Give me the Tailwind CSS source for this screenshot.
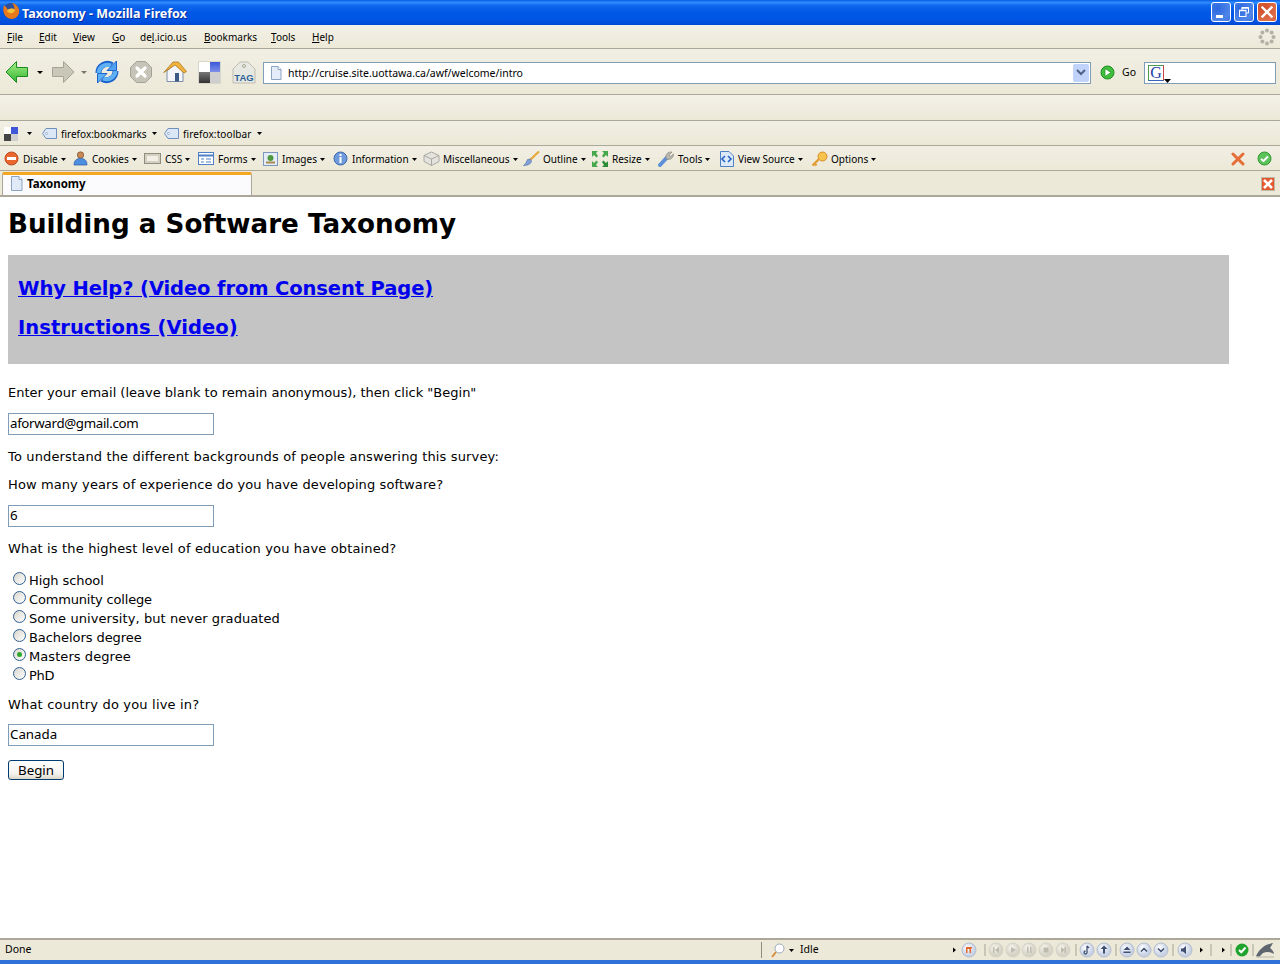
<!DOCTYPE html>
<html lang="en">
<head>
<meta charset="utf-8">
<title>Taxonomy - Mozilla Firefox</title>
<script src="https://cdn.jsdelivr.net/npm/@tailwindcss/browser@4"></script>
</head>
<body class="bg-white">
<div class="w-[1280px] h-[964px] overflow-hidden flex flex-col font-['Noto_Sans',sans-serif] text-[10px] text-black bg-[#ece9d8]">

  <!-- title bar -->
  <div class="h-[25px] shrink-0 flex items-center pl-[2px] pr-[3px] bg-[linear-gradient(#0a5fe6_0%,#2f8cff_10%,#0f68ee_22%,#0058e6_50%,#0055e5_75%,#0048d6_100%)]">
    <svg width="18" height="18" viewBox="0 0 18 18" class="shrink-0 mb-[3px]">
      <circle cx="9" cy="9" r="8" fill="#2b4f9e"/>
      <path d="M2 3 C0 8 2 16 9 17 C15 17 18 12 17 7.500 C16 4 13.500 1.500 10 1 C12 3.500 13 6 12 8 C10 6 8 6 6 8 C5 6 3.500 4.500 2 3Z" fill="#e8791c"/>
      <path d="M5 9 C7 6 11 6 13 8 C12 12 7 12 5 9Z" fill="#f5c23a"/>
    </svg>
    <span class="ml-[2px] text-white font-bold text-[12.5px] leading-none mt-[3px] [text-shadow:1px_1px_#0a2f9c]">Taxonomy - Mozilla Firefox</span>
    <div class="ml-auto flex gap-[3px] -mt-[1px]">
      <div class="w-[20px] h-[20px] rounded-[3px] border border-white bg-[radial-gradient(circle_at_30%_30%,#2b68e0,#4f86e8_70%,#3a6fe0)] flex items-end pl-[4px] pb-[3px]"><div class="w-[7px] h-[3px] bg-white"></div></div>
      <div class="w-[20px] h-[20px] rounded-[3px] border border-white bg-[radial-gradient(circle_at_30%_30%,#2b68e0,#4f86e8_70%,#3a6fe0)] flex items-center justify-center">
        <svg width="12" height="12" viewBox="0 0 12 12" fill="none" stroke="#fff"><rect x="1.500" y="4.500" width="6.500" height="6"/><path d="M4 4V1.500h6.500V7H8"/><path d="M1 4.500h7M3.500 2h7" stroke-width="1.500"/></svg>
      </div>
      <div class="w-[20px] h-[20px] rounded-[3px] border border-white bg-[radial-gradient(circle_at_30%_30%,#cf4a24,#e0704c_75%,#d8562f)] flex items-center justify-center">
        <svg width="12" height="12" viewBox="0 0 12 12" stroke="#fff" stroke-width="2.400" stroke-linecap="square"><path d="M1.500 1.500l9 9M10.500 1.500l-9 9"/></svg>
      </div>
    </div>
  </div>

  <!-- menu bar -->
  <div class="h-[24px] shrink-0 flex items-center pl-[7px] pt-[2px] border-b border-[#aca899] bg-[linear-gradient(#f3f1e7,#ece9d8)]">
    <span class="w-[32px]"><u>F</u>ile</span>
    <span class="w-[34px]"><u>E</u>dit</span>
    <span class="w-[39px]"><u>V</u>iew</span>
    <span class="w-[28px]"><u>G</u>o</span>
    <span class="w-[64px]">de<u>l</u>.icio.us</span>
    <span class="w-[67px]"><u>B</u>ookmarks</span>
    <span class="w-[41px]"><u>T</u>ools</span>
    <span><u>H</u>elp</span>
    <svg width="18" height="18" viewBox="0 0 18 18" class="ml-auto mr-[4px] -mt-[2px]" fill="#b3b0a6">
      <circle cx="9" cy="2.500" r="2"/><circle cx="13.600" cy="4.400" r="2"/><circle cx="15.500" cy="9" r="2"/><circle cx="13.600" cy="13.600" r="2"/><circle cx="9" cy="15.500" r="2"/><circle cx="4.400" cy="13.600" r="2"/><circle cx="2.500" cy="9" r="2"/><circle cx="4.400" cy="4.400" r="2"/>
    </svg>
  </div>

  <!-- navigation toolbar -->
  <div class="h-[46px] shrink-0 flex items-center pl-[5px] pt-[1px] border-b border-[#aca899] bg-[linear-gradient(#f1efe4,#ece9d8)]">
    <svg width="24" height="24" viewBox="0 0 24 24" class="shrink-0">
      <defs><linearGradient id="gb" x1="0" y1="0" x2="0" y2="1"><stop offset="0" stop-color="#a8ee88"/><stop offset="1" stop-color="#2fb52f"/></linearGradient></defs>
      <path d="M1 12 11.500 1.500V7.500H22.500V16.500H11.500V22.500Z" fill="url(#gb)" stroke="#1d8a22" stroke-linejoin="round"/>
    </svg>
    <svg width="6" height="3" viewBox="0 0 6 3" class="shrink-0 ml-[8px]"><path d="M0 0h6L3 3z" fill="#000"/></svg>
    <svg width="24" height="24" viewBox="0 0 24 24" class="shrink-0 ml-[8px]">
      <path d="M23 12 12.500 1.500V7.500H1.500V16.500H12.500V22.500Z" fill="#c9c7b8" stroke="#a5a393" stroke-linejoin="round"/>
    </svg>
    <svg width="6" height="3" viewBox="0 0 6 3" class="shrink-0 ml-[6px]"><path d="M0 0h6L3 3z" fill="#77766c"/></svg>
    <svg width="24" height="24" viewBox="0 0 24 24" class="shrink-0 ml-[8px]" fill="none">
      <path d="M3.500 13A9 9 0 0 1 17 5" stroke="#1b62cc" stroke-width="6"/>
      <path d="M21.500 1V10.500H12Z" fill="#4fa3f0" stroke="#1b62cc"/>
      <path d="M20.500 11A9 9 0 0 1 7 19" stroke="#1b62cc" stroke-width="6"/>
      <path d="M2.500 23V13.500H12Z" fill="#5db0f5" stroke="#1b62cc"/>
      <path d="M3.500 13A9 9 0 0 1 16 5.500" stroke="#5fb0f5" stroke-width="4"/>
      <path d="M20.500 11A9 9 0 0 1 8 18.500" stroke="#5fb0f5" stroke-width="4"/>
    </svg>
    <svg width="24" height="24" viewBox="0 0 24 24" class="shrink-0 ml-[10px]">
      <path d="M7.500 1.500h9l6 6v9l-6 6h-9l-6-6v-9z" fill="#c6c4b8" stroke="#a3a296"/>
      <path d="M8 8l8 8M16 8l-8 8" stroke="#fff" stroke-width="3.200" stroke-linecap="round"/>
    </svg>
    <svg width="24" height="24" viewBox="0 0 24 24" class="shrink-0 ml-[10px]">
      <path d="M4 11V21.500H20V11L12 4Z" fill="#f4f6fb" stroke="#7f8fa8"/>
      <rect x="12" y="13" width="4" height="8.500" fill="#3b5a86"/>
      <path d="M0.800 12.500 10 2H15.500L23.500 11.500 21 13 12 5Z" fill="#f3b23e" stroke="#a87a22" stroke-width=".8"/>
    </svg>
    <div class="shrink-0 ml-[11px] w-[23px] h-[23px] grid grid-cols-2 grid-rows-2 border border-[#d8d6ca]">
      <div class="bg-white"></div><div class="bg-[linear-gradient(#3d57d8,#7d8fe8)]"></div><div class="bg-[linear-gradient(#777,#333)]"></div><div class="bg-[#cfcfcf]"></div>
    </div>
    <svg width="24" height="24" viewBox="0 0 24 24" class="shrink-0 ml-[11px]">
      <path d="M1 9 8 2H16L23 9V23H1Z" fill="#e8e8e2" stroke="#bdbcb0"/>
      <circle cx="12" cy="6" r="1.500" fill="#ece9d8" stroke="#a9a89c"/>
      <text x="12" y="21" text-anchor="middle" font-family="Liberation Sans" font-weight="700" font-size="9.500" fill="#2a6297">TAG</text>
    </svg>
    <div class="shrink-0 ml-[7px] mt-[1px] w-[828px] h-[22px] border border-[#7f9db9] bg-white flex items-center pl-[6px] pr-[1px]">
      <svg width="12" height="14" viewBox="0 0 12 14" class="shrink-0"><path d="M1.500.5H8L11 3.500V13.500H1.500Z" fill="#e4edf9" stroke="#8ca4c4"/><path d="M8 .5V3.500H11" fill="#fff" stroke="#8ca4c4"/></svg>
      <span class="ml-[6px] text-[10.5px] pt-[2px]">http://cruise.site.uottawa.ca/awf/welcome/intro</span>
      <div class="ml-auto w-[16px] h-[18px] rounded-[2px] bg-[#c1d3fb] flex items-center justify-center">
        <svg width="10" height="7" viewBox="0 0 10 7" fill="none" stroke="#4d6185" stroke-width="2"><path d="M1 1l4 4 4-4"/></svg>
      </div>
    </div>
    <svg width="15" height="15" viewBox="0 0 15 15" class="shrink-0 ml-[9px]">
      <circle cx="7.500" cy="7.500" r="6.500" fill="#3fc03f" stroke="#1c8c1c"/>
      <path d="M5 3.500 11 7.500 5 11.500Z" fill="#fff" stroke="#1c8c1c" stroke-width=".7"/>
    </svg>
    <span class="ml-[7px] w-[22px] shrink-0 pt-[2px] text-[10.5px]">Go</span>
    <div class="shrink-0 mt-[1px] w-[132px] h-[22px] border border-[#7f9db9] bg-white flex items-center pl-[3px]">
      <div class="relative w-[16px] h-[16px] border border-[#4c9a4c] border-r-[#cc4444] border-b-[#3a64b8] flex items-center justify-center font-['Liberation_Serif',serif] text-[#1a3fa0] text-[16px] leading-none">G
        <svg width="7" height="4" viewBox="0 0 7 4" class="absolute left-[15px] top-[13px]"><path d="M0 0h7L3.500 4z" fill="#000"/></svg>
      </div>
    </div>
  </div>

  <!-- empty toolbar -->
  <div class="h-[26px] shrink-0 border-b border-[#aca899] bg-[linear-gradient(#f3f1e7,#ece9d8)]"></div>

  <!-- bookmarks toolbar -->
  <div class="h-[25px] shrink-0 flex items-center pl-[4px] pt-[1px] border-b border-[#aca899] bg-[linear-gradient(#f1efe4,#ece9d8)]">
    <div class="shrink-0 w-[14px] h-[14px] grid grid-cols-2 grid-rows-2">
      <div class="bg-white"></div><div class="bg-[#3d57d8]"></div><div class="bg-[#444]"></div><div class="bg-[#cfcfcf]"></div>
    </div>
    <svg width="5" height="3" viewBox="0 0 5 3" class="shrink-0 ml-[9px]"><path d="M0 0h5L2.500 3z"/></svg>
    <svg width="15" height="11" viewBox="0 0 15 11" class="shrink-0 ml-[10px]"><path d="M4 .5H14.500V10.500H4L.5 5.500Z" fill="#dbe7f7" stroke="#6f8fbd"/><circle cx="4.500" cy="5.500" r="1" fill="#fff" stroke="#6f8fbd" stroke-width=".6"/></svg>
    <span class="ml-[4px] pt-[1px] w-[90px] shrink-0">firefox:bookmarks</span>
    <svg width="5" height="3" viewBox="0 0 5 3" class="shrink-0 ml-[1px]"><path d="M0 0h5L2.500 3z"/></svg>
    <svg width="15" height="11" viewBox="0 0 15 11" class="shrink-0 ml-[7px]"><path d="M4 .5H14.500V10.500H4L.5 5.500Z" fill="#dbe7f7" stroke="#6f8fbd"/><circle cx="4.500" cy="5.500" r="1" fill="#fff" stroke="#6f8fbd" stroke-width=".6"/></svg>
    <span class="ml-[4px] pt-[1px] w-[73px] shrink-0 tracking-[0.1px]">firefox:toolbar</span>
    <svg width="5" height="3" viewBox="0 0 5 3" class="shrink-0 ml-[1px]"><path d="M0 0h5L2.500 3z"/></svg>
  </div>

  <!-- web developer toolbar -->
  <div class="h-[25px] shrink-0 flex items-center pl-[4px] pr-[8px] pt-[2px] border-b border-[#aca899] bg-[linear-gradient(#f1efe4,#ece9d8)]">
    <div class="w-[69px] shrink-0 flex items-center">
      <svg width="15" height="15" viewBox="0 0 15 15" class="shrink-0 -mt-[1px]"><circle cx="7.500" cy="7.500" r="6.500" fill="#e9672f" stroke="#c04a20"/><rect x="3" y="6" width="9" height="3" fill="#fff"/></svg>
      <span class="ml-[4px]">Disable</span><svg width="5" height="3" viewBox="0 0 5 3" class="ml-[3px]"><path d="M0 0h5L2.500 3z"/></svg>
    </div>
    <div class="w-[71px] shrink-0 flex items-center">
      <svg width="15" height="15" viewBox="0 0 15 15" class="shrink-0 -mt-[1px]"><circle cx="7.500" cy="4" r="3.200" fill="#c98a55" stroke="#7a4f2c" stroke-width=".7"/><path d="M1 14C1 9 4 7.500 7.500 7.500S14 9 14 14Z" fill="#4d8ee0" stroke="#2c5ca6" stroke-width=".7"/></svg>
      <span class="ml-[4px]">Cookies</span><svg width="5" height="3" viewBox="0 0 5 3" class="ml-[3px]"><path d="M0 0h5L2.500 3z"/></svg>
    </div>
    <div class="w-[54px] shrink-0 flex items-center">
      <svg width="17" height="11" viewBox="0 0 17 11" class="shrink-0 -mt-[1px]"><rect x=".5" y=".5" width="16" height="10" fill="#d3d0c2" stroke="#8f8d80"/><rect x="3" y="3" width="11" height="5" fill="#f2f0e6"/></svg>
      <span class="ml-[4px]">CSS</span><svg width="5" height="3" viewBox="0 0 5 3" class="ml-[3px]"><path d="M0 0h5L2.500 3z"/></svg>
    </div>
    <div class="w-[65px] shrink-0 flex items-center">
      <svg width="16" height="13" viewBox="0 0 16 13" class="shrink-0 -mt-[1px]"><rect x=".5" y=".5" width="15" height="12" fill="#fff" stroke="#4f7fc4"/><path d="M1 3.500h14" stroke="#4f7fc4" stroke-width="2"/><path d="M3 7h3M8 7h5M3 10h3M8 10h5" stroke="#4f7fc4"/></svg>
      <span class="ml-[4px]">Forms</span><svg width="5" height="3" viewBox="0 0 5 3" class="ml-[3px]"><path d="M0 0h5L2.500 3z"/></svg>
    </div>
    <div class="w-[70px] shrink-0 flex items-center">
      <svg width="15" height="14" viewBox="0 0 15 14" class="shrink-0 -mt-[1px]"><rect x=".5" y=".5" width="14" height="13" fill="#e4edf7" stroke="#7d97bd"/><circle cx="7.500" cy="6" r="3" fill="#4f9a3e"/><rect x="3" y="9.500" width="9" height="2" fill="#a98a4f"/></svg>
      <span class="ml-[4px]">Images</span><svg width="5" height="3" viewBox="0 0 5 3" class="ml-[3px]"><path d="M0 0h5L2.500 3z"/></svg>
    </div>
    <div class="w-[90px] shrink-0 flex items-center">
      <svg width="15" height="15" viewBox="0 0 15 15" class="shrink-0 -mt-[1px]"><circle cx="7.500" cy="7.500" r="6.500" fill="#6f9bdc" stroke="#3a68ad"/><rect x="6.500" y="3" width="2" height="2" fill="#fff"/><rect x="6.500" y="6" width="2" height="6" fill="#fff"/></svg>
      <span class="ml-[4px]">Information</span><svg width="5" height="3" viewBox="0 0 5 3" class="ml-[3px]"><path d="M0 0h5L2.500 3z"/></svg>
    </div>
    <div class="w-[100px] shrink-0 flex items-center">
      <svg width="17" height="15" viewBox="0 0 17 15" class="shrink-0 -mt-[1px]"><path d="M8.500 1 16 4.500V10.500L8.500 14.500 1 10.500V4.500Z" fill="#e4e3de" stroke="#a9a8a0"/><path d="M1 4.500 8.500 8 16 4.500M8.500 8V14.500" fill="none" stroke="#a9a8a0"/></svg>
      <span class="ml-[3px]">Miscellaneous</span><svg width="5" height="3" viewBox="0 0 5 3" class="ml-[3px]"><path d="M0 0h5L2.500 3z"/></svg>
    </div>
    <div class="w-[68px] shrink-0 flex items-center">
      <svg width="17" height="15" viewBox="0 0 17 15" class="shrink-0 -mt-[1px]"><path d="M16 .5 7 9" stroke="#e7a93a" stroke-width="2.200"/><path d="M7.500 8 4.500 8.500C3 11 3 13 .5 14.500 4 14.500 8 13.500 8.500 10Z" fill="#7fa0d6" stroke="#4f6fa8" stroke-width=".6"/></svg>
      <span class="ml-[3px]">Outline</span><svg width="5" height="3" viewBox="0 0 5 3" class="ml-[3px]"><path d="M0 0h5L2.500 3z"/></svg>
    </div>
    <div class="w-[67px] shrink-0 flex items-center">
      <svg width="18" height="18" viewBox="0 0 18 18" class="shrink-0 -mt-[1px]" fill="#45a84a"><path d="M1 1H7L5 3 7 6 5.500 7.500 3 5 1 7Z"/><path d="M17 1V7L15 5 12.500 7.500 11 6 13 3 11 1Z"/><path d="M1 17V11L3 13 5.500 10.500 7 12 5 15 7 17Z"/><path d="M17 17H11L13 15 11 12 12.500 10.500 15 13 17 11Z" fill="#2a8c35"/></svg>
      <span class="ml-[3px]">Resize</span><svg width="5" height="3" viewBox="0 0 5 3" class="ml-[3px]"><path d="M0 0h5L2.500 3z"/></svg>
    </div>
    <div class="w-[61px] shrink-0 flex items-center">
      <svg width="16" height="16" viewBox="0 0 16 16" class="shrink-0 -mt-[1px]"><path d="M2 14 9 6.500" stroke="#5f8fd6" stroke-width="4" stroke-linecap="round"/><path d="M8 7C7 3.500 10 .5 14 1L11 4 12.500 5.500 15.500 3C15.500 7 12 9.500 8.500 8Z" fill="#b9b8b0" stroke="#7d7c74" stroke-width=".6"/></svg>
      <span class="ml-[4px]">Tools</span><svg width="5" height="3" viewBox="0 0 5 3" class="ml-[3px]"><path d="M0 0h5L2.500 3z"/></svg>
    </div>
    <div class="w-[92px] shrink-0 flex items-center">
      <svg width="15" height="16" viewBox="0 0 15 16" class="shrink-0 -mt-[1px]"><path d="M1.500.5H10L14.500 5V15.500H1.500Z" fill="#dce9f9" stroke="#4f7fc4"/><path d="M6 5 3 8l3 3M9 5l3 3-3 3" fill="none" stroke="#2a62c2" stroke-width="1.600"/></svg>
      <span class="ml-[4px]">View Source</span><svg width="5" height="3" viewBox="0 0 5 3" class="ml-[3px]"><path d="M0 0h5L2.500 3z"/></svg>
    </div>
    <div class="shrink-0 flex items-center">
      <svg width="17" height="16" viewBox="0 0 17 16" class="shrink-0 -mt-[1px]"><circle cx="11.500" cy="5.500" r="4.500" fill="#f6c34d" stroke="#d98a2a"/><path d="M8 8 1.500 14.500M3.500 12.500l2 2" stroke="#e39b35" stroke-width="2.400"/></svg>
      <span class="ml-[3px]">Options</span><svg width="5" height="3" viewBox="0 0 5 3" class="ml-[3px]"><path d="M0 0h5L2.500 3z"/></svg>
    </div>
    <svg width="14" height="14" viewBox="0 0 14 14" class="ml-auto shrink-0 -mt-[1px]" stroke="#e56d36" stroke-width="3" stroke-linecap="round"><path d="M2 2l10 10M12 2 2 12"/></svg>
    <svg width="15" height="15" viewBox="0 0 15 15" class="ml-[12px] shrink-0 -mt-[1px]"><circle cx="7.500" cy="7.500" r="6.500" fill="#5cc25c" stroke="#2e9a2e"/><path d="M4 8l2.500 2L11 5.500" fill="none" stroke="#fff" stroke-width="2"/></svg>
  </div>

  <!-- tab bar -->
  <div class="h-[26px] shrink-0 flex items-end pl-[2px] border-b-[2px] border-[#aca899] bg-[#ece9d8]">
    <div class="w-[250px] h-[23px] flex items-center pl-[7px] pb-[3px] bg-[#fbfbfd] border-x border-[#aca899] border-t-[3px] border-t-[#f5a623] rounded-t-[2px]">
      <svg width="13" height="15" viewBox="0 0 13 15" class="shrink-0"><path d="M1.500.5H9L12 3.500V14.500H1.500Z" fill="#e1ebf8" stroke="#8ca4c4"/><path d="M9 .5V3.500H12" fill="#fff" stroke="#8ca4c4"/></svg>
      <span class="ml-[4px] font-bold text-[11.5px]">Taxonomy</span>
    </div>
    <div class="ml-auto mr-[5px] mb-[4px] w-[14px] h-[14px] bg-[#e4592f] border border-[#bdb9a6] flex items-center justify-center">
      <svg width="10" height="10" viewBox="0 0 10 10" stroke="#fff" stroke-width="2.600"><path d="M1 1l8 8M9 1 1 9"/></svg>
    </div>
  </div>

  <!-- page content -->
  <main class="h-[741px] shrink-0 bg-white px-[8px] font-['DejaVu_Sans',sans-serif] text-[13px] leading-[16px] overflow-hidden">
    <h1 class="mt-[11px] mb-[15px] text-[26.2px] leading-[32px] font-bold">Building a Software Taxonomy</h1>
    <div class="w-[1221px] h-[109px] bg-[#c4c4c4] pl-[10px] pt-[22px] text-[19.5px] leading-[24px] font-bold text-[#0000ee]">
      <a href="#" class="block underline tracking-[-0.11px]">Why Help? (Video from Consent Page)</a>
      <a href="#" class="block underline mt-[15px] tracking-[0.05px]">Instructions (Video)</a>
    </div>
    <p class="mt-[21px]">Enter your email (leave blank to remain anonymous), then click "Begin"</p>
    <input type="text" value="aforward@gmail.com" class="block mt-[12px] w-[206px] h-[22px] border border-[#7f9db9] pl-[1px] pb-[2px] font-['Noto_Sans',sans-serif] text-[13.3px] tracking-[-0.33px] bg-white">
    <p class="mt-[14px] tracking-[0.15px]">To understand the different backgrounds of people answering this survey:</p>
    <p class="mt-[12px] tracking-[0.1px]">How many years of experience do you have developing software?</p>
    <input type="text" value="6" class="block mt-[12px] w-[206px] h-[22px] border border-[#7f9db9] pl-[1px] pb-[2px] font-['Noto_Sans',sans-serif] text-[13.3px] bg-white">
    <p class="mt-[14px] tracking-[0.16px]">What is the highest level of education you have obtained?</p>
    <div class="mt-[14px]">
      <div class="h-[19px] flex items-center pl-[5px]"><span class="w-[13px] h-[13px] rounded-full border border-[#2f5f8f] bg-[linear-gradient(135deg,#d8d6cc,#fff)] -mt-[5px] shrink-0"></span><span class="ml-[3px] tracking-[-0.09px]">High school</span></div>
      <div class="h-[19px] flex items-center pl-[5px]"><span class="w-[13px] h-[13px] rounded-full border border-[#2f5f8f] bg-[linear-gradient(135deg,#d8d6cc,#fff)] -mt-[5px] shrink-0"></span><span class="ml-[3px] tracking-[-0.18px]">Community college</span></div>
      <div class="h-[19px] flex items-center pl-[5px]"><span class="w-[13px] h-[13px] rounded-full border border-[#2f5f8f] bg-[linear-gradient(135deg,#d8d6cc,#fff)] -mt-[5px] shrink-0"></span><span class="ml-[3px] tracking-[0.08px]">Some university, but never graduated</span></div>
      <div class="h-[19px] flex items-center pl-[5px]"><span class="w-[13px] h-[13px] rounded-full border border-[#2f5f8f] bg-[linear-gradient(135deg,#d8d6cc,#fff)] -mt-[5px] shrink-0"></span><span class="ml-[3px] tracking-[-0.06px]">Bachelors degree</span></div>
      <div class="h-[19px] flex items-center pl-[5px]"><span class="w-[13px] h-[13px] rounded-full border border-[#2f5f8f] bg-[linear-gradient(135deg,#d8d6cc,#fff)] -mt-[5px] shrink-0 flex items-center justify-center"><span class="w-[5px] h-[5px] rounded-full bg-[#2fa82f]"></span></span><span class="ml-[3px] tracking-[0.07px]">Masters degree</span></div>
      <div class="h-[19px] flex items-center pl-[5px]"><span class="w-[13px] h-[13px] rounded-full border border-[#2f5f8f] bg-[linear-gradient(135deg,#d8d6cc,#fff)] -mt-[5px] shrink-0"></span><span class="ml-[3px] tracking-[-0.3px]">PhD</span></div>
    </div>
    <p class="mt-[12px] tracking-[0.18px]">What country do you live in?</p>
    <input type="text" value="Canada" class="block mt-[11px] w-[206px] h-[22px] border border-[#7f9db9] pl-[1px] pb-[2px] font-['Noto_Sans',sans-serif] text-[13.3px] bg-white">
    <button class="block mt-[14px] w-[56px] h-[20px] pt-[2px] rounded-[3px] border border-[#003c74] bg-[linear-gradient(#fff,#f4f3ee_70%,#dcd8c8)] font-['Noto_Sans',sans-serif] text-[13.3px] leading-none">Begin</button>
  </main>

  <!-- status bar -->
  <div class="h-[22px] shrink-0 flex items-center border-t-[2px] border-[#aca899] bg-[#ece9d8] pl-[5px] text-[10.5px]">
    <span class="w-[756px] shrink-0">Done</span>
    <div class="w-[1px] h-[16px] bg-[#8f8d80] shrink-0"></div>
    <svg width="14" height="15" viewBox="0 0 14 15" class="shrink-0 ml-[9px]" fill="none"><circle cx="8.500" cy="5.500" r="4.500" fill="#fff" stroke="#9aa8bb"/><path d="M5 9 1 14" stroke="#d98a3a" stroke-width="2"/></svg>
    <svg width="5" height="3" viewBox="0 0 5 3" class="shrink-0 ml-[4px]"><path d="M0 0h5L2.500 3z"/></svg>
    <span class="ml-[6px] w-[20px] shrink-0">Idle</span>
    <svg width="302" height="16" viewBox="0 0 302 16" class="shrink-0 ml-[133px]">
      <defs>
        <radialGradient id="btn" cx=".4" cy=".35"><stop offset="0" stop-color="#fff"/><stop offset="1" stop-color="#c9d3e6"/></radialGradient>
        <radialGradient id="btd" cx=".4" cy=".35"><stop offset="0" stop-color="#f7f6ef"/><stop offset="1" stop-color="#d5d3c6"/></radialGradient>
      </defs>
      <path d="M0 5.500 3 8 0 10.500Z"/>
      <circle cx="16" cy="8" r="7" fill="url(#btn)" stroke="#b3bccf"/><path d="M13 5h6v1.500h-1V11h-1.500V7H14.500V11H13Z" fill="#e0662a"/>
      <path d="M32 2v12" stroke="#a5a394"/>
      <g fill="url(#btd)" stroke="#d5d3c6">
        <circle cx="43" cy="8" r="7"/><circle cx="60" cy="8" r="7"/><circle cx="76" cy="8" r="7"/><circle cx="93" cy="8" r="7"/><circle cx="110" cy="8" r="7"/>
      </g>
      <g fill="#bdbbae">
        <path d="M40 5h1.500v6H40ZM46 5v6L42 8Z"/><path d="M58 5 63 8 58 11Z"/><path d="M74 5h1.500v6H74ZM77 5h1.500v6H77Z"/><path d="M90.500 5.500h5v5h-5Z"/><path d="M108 5v6l4-3ZM113 5h-1.500v6H113Z"/>
      </g>
      <path d="M123 2v12" stroke="#a5a394"/>
      <g fill="url(#btn)" stroke="#b3bccf">
        <circle cx="134" cy="8" r="7"/><circle cx="151" cy="8" r="7"/>
        <circle cx="174" cy="8" r="7"/><circle cx="191" cy="8" r="7"/><circle cx="208" cy="8" r="7"/><circle cx="232" cy="8" r="7"/>
      </g>
      <path d="M134 4v6.500M134 10.500a1.500 1.500 0 1 1-1.500-1.500M134 4l2 2" fill="none" stroke="#3f4f72" stroke-width="1.300"/>
      <path d="M151 3.500 147.500 7H150V11.500H152V7H154.500Z" fill="#3f4f72"/>
      <path d="M163 2v12" stroke="#a5a394"/>
      <path d="M174 4.500 170.500 8H177.500ZM170.500 9.500H177.500V11H170.500Z" fill="#3f4f72"/>
      <path d="M188 9.500l3-3 3 3M205 6.500l3 3 3-3" fill="none" stroke="#3f4f72" stroke-width="1.500"/>
      <path d="M220 2v12" stroke="#a5a394"/>
      <path d="M228 6.500H230L233 4V12L230 9.500H228Z" fill="#3f4f72"/>
      <path d="M247 5.500 250 8 247 10.500Z"/>
      <path d="M258 2v12" stroke="#a5a394"/>
      <path d="M269 5.500 272 8 269 10.500Z"/>
      <path d="M278 2v12" stroke="#a5a394"/>
      <circle cx="289" cy="8" r="6.500" fill="#1fa32f"/><path d="M286 8l2.300 2.200L292.500 5.500" fill="none" stroke="#fff" stroke-width="2"/>
      <path d="M300 2v12" stroke="#a5a394"/>
    </svg>
    <svg width="20" height="16" viewBox="0 0 20 16" class="shrink-0"><path d="M1 14C4 7 10 2 18 1L15 6C17 7.500 19 10 19 12 16 10 12 9 8 11L4 15Z" fill="#5e6670"/><path d="M1 15H19" stroke="#b9b6a8"/></svg>
  </div>
  <div class="h-[4px] shrink-0 bg-[#2f71d8]"></div>
</div>
</body>
</html>
